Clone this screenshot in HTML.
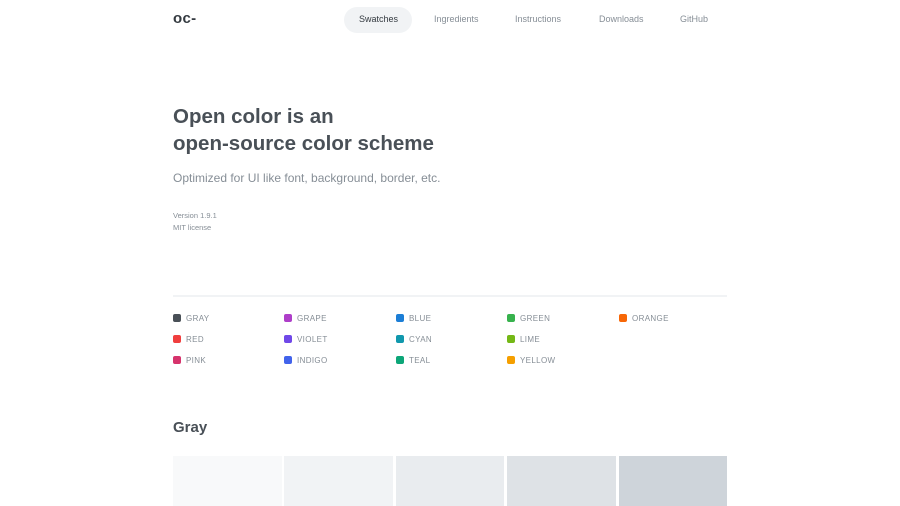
<!DOCTYPE html>
<html><head><style>
*{margin:0;padding:0;box-sizing:border-box}
body{width:900px;height:500px;overflow:hidden;background:#fff;font-family:"Liberation Sans",sans-serif;color:#495057;position:relative}
.a{position:absolute;white-space:nowrap}
.nav{font-size:9px;color:#868e96;top:14px}
.pill{position:absolute;left:344px;top:7px;width:68px;height:26px;border-radius:13px;background:#f1f3f5}
h1{font-size:20.5px;font-weight:bold;color:#495057;line-height:27px}
.leg{font-size:8px;color:#868e96;letter-spacing:.35px}
.leg i{position:absolute;left:-13px;top:0;width:8px;height:8px;border-radius:2px}
.sw{position:absolute;top:456px;height:50px}
</style></head><body>
<div class="a" style="left:173px;top:10px;font-size:15px;font-weight:bold;color:#343a40;letter-spacing:.3px">oc-</div>
<div class="pill"></div>
<div class="a nav" style="left:359px;color:#343a40">Swatches</div>
<div class="a nav" style="left:434px">Ingredients</div>
<div class="a nav" style="left:515px">Instructions</div>
<div class="a nav" style="left:599px">Downloads</div>
<div class="a nav" style="left:680px">GitHub</div>
<h1 class="a" style="left:173px;top:103px">Open color is an<br>open-source color scheme</h1>
<div class="a" style="left:173px;top:171px;font-size:12px;color:#868e96">Optimized for UI like font, background, border, etc.</div>
<div class="a" style="left:173px;top:210px;font-size:7.5px;color:#868e96;line-height:12px">Version 1.9.1<br>MIT license</div>
<div class="a" style="left:173px;top:295px;width:554px;height:2px;background:#f1f3f5"></div>
<div class="a leg" style="left:186px;top:314px"><i style="background:#495057"></i>GRAY</div>
<div class="a leg" style="left:186px;top:335px"><i style="background:#f03e3e"></i>RED</div>
<div class="a leg" style="left:186px;top:356px"><i style="background:#d6336c"></i>PINK</div>
<div class="a leg" style="left:297px;top:314px"><i style="background:#ae3ec9"></i>GRAPE</div>
<div class="a leg" style="left:297px;top:335px"><i style="background:#7048e8"></i>VIOLET</div>
<div class="a leg" style="left:297px;top:356px"><i style="background:#4263eb"></i>INDIGO</div>
<div class="a leg" style="left:409px;top:314px"><i style="background:#1c7ed6"></i>BLUE</div>
<div class="a leg" style="left:409px;top:335px"><i style="background:#1098ad"></i>CYAN</div>
<div class="a leg" style="left:409px;top:356px"><i style="background:#0ca678"></i>TEAL</div>
<div class="a leg" style="left:520px;top:314px"><i style="background:#37b24d"></i>GREEN</div>
<div class="a leg" style="left:520px;top:335px"><i style="background:#74b816"></i>LIME</div>
<div class="a leg" style="left:520px;top:356px"><i style="background:#f59f00"></i>YELLOW</div>
<div class="a leg" style="left:632px;top:314px"><i style="background:#f76707"></i>ORANGE</div>
<div class="a" style="left:173px;top:419px;font-size:15px;font-weight:bold;color:#495057">Gray</div>
<div class="sw" style="left:173px;width:109px;background:#f8f9fa"></div>
<div class="sw" style="left:284px;width:109px;background:#f1f3f5"></div>
<div class="sw" style="left:396px;width:108px;background:#e9ecef"></div>
<div class="sw" style="left:507px;width:109px;background:#dee2e6"></div>
<div class="sw" style="left:619px;width:108px;background:#ced4da"></div>
</body></html>
